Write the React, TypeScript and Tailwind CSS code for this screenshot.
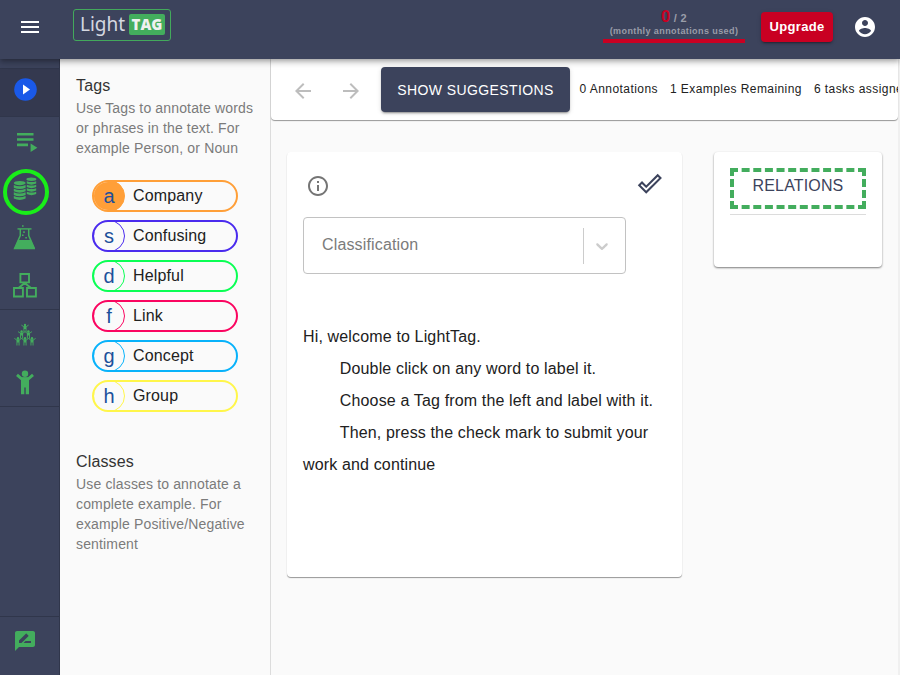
import React from "react";

const tags = [
  { key: "a", name: "Company", border: "border-[#ff9f38]", fill: "bg-[#ff9f38]" },
  { key: "s", name: "Confusing", border: "border-[#4a2bee]", fill: "" },
  { key: "d", name: "Helpful", border: "border-[#0aff54]", fill: "" },
  { key: "f", name: "Link", border: "border-[#fa0560]", fill: "" },
  { key: "g", name: "Concept", border: "border-[#08b2fa]", fill: "" },
  { key: "h", name: "Group", border: "border-[#fff64a]", fill: "" },
];

function Logo() {
  return (
    <div className="mt-[9px] ml-[33px] flex h-8 w-[98px] items-center rounded-[3px] border-[1.5px] border-[#43a95c] pl-[6px] font-['Noto_Sans',sans-serif]">
      <span className="w-[49px] pb-[2px] text-[19px] leading-[26px] font-normal text-[#d5d8e0]">Light</span>
      <span className="mb-px flex h-[21px] w-9 items-center justify-center rounded-[2px] bg-[#43ad5d] font-['Open_Sans',sans-serif] text-[15px] font-extrabold text-[#eef1f0]">TAG</span>
    </div>
  );
}

function Coins() {
  return (
    <svg width="48" height="48" viewBox="2 168 48 48" fill="#43ad5d">
      <circle cx="26" cy="192" r="21" fill="none" stroke="#19ee19" strokeWidth="4" />
      {[0, 1, 2, 3].map((i) => (
        <path key={i} d={`M26.800 ${181.200 + i * 3.500}q5 1.800 9.400 0v2.400q-4.800 2.200-9.400 0z`} />
      ))}
      <ellipse cx="31.400" cy="179.300" rx="5" ry="1.700" />
      {[0, 1, 2, 3].map((i) => (
        <path key={i} d={`M13.800 ${185.100 + i * 3.600}q5.900 2.500 11.800 0v2.600q-5.900 2.800-11.800 0z`} />
      ))}
      <ellipse cx="19.700" cy="183.100" rx="5.900" ry="2.100" />
    </svg>
  );
}

function Figure({ x, y }: { x: number; y: number }) {
  return (
    <g transform={`translate(${x} ${y})`}>
      <circle cx="0" cy="1.500" r="1.200" />
      <path d="M-3.600 1.600l2.200 1.500h2.800l2.200-1.500" stroke="#43ad5d" strokeWidth="0.900" fill="none" />
      <path d="M-1.500 2.800h3v5.800H.6V5.600H-.6v3h-.9z" />
    </g>
  );
}

function SideNav() {
  return (
    <nav className="flex w-[60px] shrink-0 flex-col border-r border-[#30364b] bg-[#3c435c] pt-[9px]">
      <div className="flex h-[49px] items-center border-t border-b border-[#30364b] bg-[#34394f] pb-[6px] pl-[14px]">
        <svg width="23" height="23" viewBox="0 0 23 23">
          <circle cx="11.500" cy="11.500" r="11.300" fill="#1a59e8" />
          <path d="M9 6.500v10l7-5z" fill="white" />
        </svg>
      </div>
      <div className="flex h-[50px] items-center pl-[17px]">
        <svg width="21" height="20" fill="#43ad5d">
          <path d="M0 1h16.500v2.600H0zM0 6.200h16.500v2.600H0zM0 11.600h11v2.600H0zM13.600 11.600v8.400l6.800-4.200z" />
        </svg>
      </div>
      <div className="flex h-[49px] items-center pl-[2px]">
        <Coins />
      </div>
      <div className="flex h-[44px] items-center pl-[13px]">
        <svg width="22" height="26" viewBox="13 225 22 26" fill="#43ad5d">
          <path d="M17.500 228.200h14v1.400h-14z" />
          <path d="M20.300 229v6.500L14.600 248.400h19.800L28.700 235.500V229" fill="none" stroke="#43ad5d" strokeWidth="1.500" />
          <path d="M18 240h13l4 9H14z" />
          <path d="M22 225.200h1.600v1.600H22zM23.200 231.300h1.600v1.600h-1.600zM22 234.500h1.600v1.600H22zM25.300 237h1.600v1.600h-1.600z" />
        </svg>
      </div>
      <div className="flex h-[50px] items-center border-b border-[#30364b] pl-[13px]">
        <svg width="24" height="26" viewBox="13 272 24 26" fill="none" stroke="#43ad5d" strokeWidth="1.900">
          <path d="M20.400 274h8.600v8.400h-8.600zM14 288h8.900v8.500H14zM27 288h8.900v8.500H27zM18.500 288l6.200-5 6.300 5" />
        </svg>
      </div>
      <div className="flex h-[49px] items-center pl-[13px]">
        <svg width="24" height="24" viewBox="0 0 24 24" fill="#43ad5d">
          <Figure x={12} y={0.500} />
          <Figure x={8.600} y={7} />
          <Figure x={15.400} y={7} />
          <Figure x={5} y={13.800} />
          <Figure x={12} y={13.800} />
          <Figure x={19} y={13.800} />
        </svg>
      </div>
      <div className="flex h-12 items-center border-b border-[#30364b] pl-4">
        <svg width="18" height="25" viewBox="0 0 18 25" fill="#43ad5d">
          <circle cx="9" cy="3.700" r="3.200" />
          <path d="M1 4.800l4.600 4h6.800l4.600-4" fill="none" stroke="#43ad5d" strokeWidth="2.900" />
          <path d="M5 7.600h8v16.600H9.700V17.500H8.300v6.700H5z" />
        </svg>
      </div>
      <div className="mt-auto flex h-[59px] items-start border-t border-[#30364b] pt-3 pl-[13px]">
        <svg width="24" height="24" viewBox="0 0 24 24" fill="#43ad5d">
          <path d="M20 2H4c-1.100 0-1.990.9-1.990 2L2 22l4-4h14c1.100 0 2-.9 2-2V4c0-1.100-.9-2-2-2zM6 14v-2.470l6.880-6.880c.2-.2.51-.2.71 0l1.770 1.770c.2.2.2.51 0 .71L8.470 14H6zm12 0h-7.500l2-2H18v2z" />
        </svg>
      </div>
    </nav>
  );
}

export default function App() {
  return (
    <div className="flex h-[675px] w-[900px] flex-col overflow-hidden bg-[#fafafa] font-['Liberation_Sans',Arial,sans-serif] text-[#212121]">
      <header className="relative z-10 flex h-[59px] shrink-0 bg-[#3c435c] shadow-[0_2px_4px_-1px_rgba(0,0,0,0.2),0_4px_5px_0_rgba(0,0,0,0.14),0_1px_10px_0_rgba(0,0,0,0.12)]">
        <svg className="mt-[15px] ml-[18px] h-6 w-[22px]" viewBox="2 0 22 24" fill="white">
          <path d="M3 18h18v-2H3v2zm0-5h18v-2H3v2zm0-7v2h18V6H3z" transform="translate(2 0)" />
        </svg>
        <Logo />
        <div className="ml-auto flex h-[43px] w-[142px] flex-col items-center border-b-4 border-[#c90022] pt-[7px] font-bold text-[#9a9da9]">
          <div className="flex h-[18px] items-baseline text-[11px] leading-[18px] tracking-[0.4px]">
            <span className="mr-[3.500px] text-[16.500px] tracking-normal text-[#c90022]">0</span>
            <span>/ 2</span>
          </div>
          <div className="text-[9px] leading-3 tracking-[0.41px] whitespace-nowrap">(monthly annotations used)</div>
        </div>
        <button className="mt-3 ml-4 h-[30px] w-[72px] rounded bg-[#c90022] text-[13px] font-bold tracking-[0.35px] text-white shadow-[0_3px_1px_-2px_rgba(0,0,0,0.2),0_2px_2px_0_rgba(0,0,0,0.14),0_1px_5px_0_rgba(0,0,0,0.12)]">
          Upgrade
        </button>
        <svg className="mt-[15px] mr-[23px] ml-5 h-6 w-6" viewBox="0 0 24 24" fill="white">
          <path d="M12 2C6.480 2 2 6.480 2 12s4.480 10 10 10 10-4.480 10-10S17.520 2 12 2zm0 3c1.660 0 3 1.340 3 3s-1.340 3-3 3-3-1.340-3-3 1.340-3 3-3zm0 14.200c-2.500 0-4.710-1.280-6-3.220.03-1.990 4-3.080 6-3.080 1.990 0 5.970 1.090 6 3.080-1.290 1.940-3.500 3.220-6 3.220z" />
        </svg>
      </header>

      <div className="flex min-h-0 flex-1">
        <SideNav />

        <aside className="w-[211px] shrink-0 border-r border-[#dcdcdc] pt-[15px] pl-4">
          <h2 className="text-[16px] leading-6 tracking-[0.15px] text-[#333]">Tags</h2>
          <p className="w-[184px] text-[14px] leading-5 tracking-[0.15px] text-[#7b7b7b]">
            Use Tags to annotate words or phrases in the text. For example Person, or Noun
          </p>
          <ul className="mt-[22px] ml-4 flex flex-col gap-2">
            {tags.map((t) => (
              <li key={t.key} className={`flex h-8 w-[146px] overflow-hidden rounded-full border-2 ${t.border}`}>
                <span className={`-mt-[2px] -ml-px flex h-8 w-8 shrink-0 items-center justify-center rounded-full border text-[20px] text-[#1c509b] ${t.border} ${t.fill}`}>
                  {t.key}
                </span>
                <span className="ml-2 text-[16px] leading-[27px] tracking-[0.15px]">{t.name}</span>
              </li>
            ))}
          </ul>
          <h2 className="mt-[38px] text-[16px] leading-6 tracking-[0.15px] text-[#333]">Classes</h2>
          <p className="w-[184px] text-[14px] leading-5 tracking-[0.15px] text-[#7b7b7b]">
            Use classes to annotate a complete example. For example Positive/Negative sentiment
          </p>
        </aside>

        <main className="min-w-0 flex-1 border-r-2 border-[#f0f0f0]">
          <div className="flex h-[61px] items-center overflow-hidden rounded-b bg-white pl-5 shadow-[0_1px_1px_0_rgba(0,0,0,0.4)]">
            <svg className="mt-[3px] h-6 w-6 shrink-0" viewBox="0 0 24 24" fill="#bdbdbd">
              <path d="M20 11H7.830l5.590-5.590L12 4l-8 8 8 8 1.410-1.410L7.830 13H20v-2z" />
            </svg>
            <svg className="mt-[3px] ml-6 h-6 w-6 shrink-0" viewBox="0 0 24 24" fill="#bdbdbd">
              <path d="M12 4l-1.410 1.410L16.170 11H4v2h12.170l-5.580 5.590L12 20l8-8z" />
            </svg>
            <button className="ml-[18px] h-[45px] w-[189px] shrink-0 rounded bg-[#3c435c] pt-px text-[14px] tracking-[0.4px] whitespace-nowrap text-white shadow-[0_3px_1px_-2px_rgba(0,0,0,0.2),0_2px_2px_0_rgba(0,0,0,0.14),0_1px_5px_0_rgba(0,0,0,0.12)]">
              SHOW SUGGESTIONS
            </button>
            <div className="ml-[9.600px] flex shrink-0 gap-3 pb-[2px] text-[12px] tracking-[0.43px] whitespace-nowrap">
              <span>0 Annotations</span>
              <span>1 Examples Remaining</span>
              <span>6 tasks assigned</span>
            </div>
          </div>

          <div className="mt-8 ml-4 flex items-start gap-8">
            <section className="h-[425px] w-[395px] rounded bg-white px-4 pt-[21px] shadow-[0_1px_1px_0_rgba(0,0,0,0.4)]">
              <div className="flex h-6 justify-between px-[3px]">
                <svg className="mt-px h-6 w-6" viewBox="0 0 24 24" fill="#757575">
                  <path d="M11 17h2v-6h-2v6zm1-15C6.480 2 2 6.480 2 12s4.480 10 10 10 10-4.480 10-10S17.520 2 12 2zm0 18c-4.410 0-8-3.590-8-8s3.590-8 8-8 8 3.590 8 8-3.590 8-8 8zM11 9h2V7h-2v2z" />
                </svg>
                <svg className="h-6 w-[26px]" viewBox="0 0 26 24" fill="none">
                  <path d="M2.900 10.200l6.300 6.300L22.800 2.900" stroke="#3c435c" strokeWidth="6" />
                  <path d="M4.300 11.600l4.900 4.900L21.400 4.300" stroke="white" strokeWidth="1.900" />
                </svg>
              </div>
              <div className="mt-5 flex h-[57px] w-[323px] items-center rounded border border-[#c2c2c2] pl-[18px]">
                <span className="pb-[2px] text-[16px] tracking-[0.15px] text-[#7b7b7b]">Classification</span>
                <span className="mr-[8px] ml-auto h-9 w-px bg-[#ccc]" />
                <svg className="mt-px mr-[13px]" width="20" height="20" viewBox="0 0 20 20" fill="#ccc">
                  <path d="M4.516 7.548c.436-.446 1.043-.481 1.576 0L10 11.295l3.908-3.747c.533-.481 1.141-.446 1.574 0 .436.445.408 1.197 0 1.615-.406.418-4.695 4.502-4.695 4.502a1.095 1.095 0 01-1.576 0S4.924 9.581 4.516 9.163s-.436-1.170 0-1.615z" />
                </svg>
              </div>
              <div className="mt-[47px] text-[16px] leading-8 tracking-[0.15px]">
                <p>Hi, welcome to LightTag.</p>
                <p className="indent-[36.800px]">Double click on any word to label it.</p>
                <p className="indent-[36.800px]">Choose a Tag from the left and label with it.</p>
                <p className="indent-[36.800px]">Then, press the check mark to submit your work and continue</p>
              </div>
            </section>

            <section className="h-[115px] w-[168px] rounded bg-white p-4 shadow-[0_1px_2px_0_rgba(0,0,0,0.5)]">
              <div className="h-[41px] border-4 border-dashed border-[#43ad5d] text-center text-[16px] leading-[27px] tracking-[0.15px] text-[#3c435c]">RELATIONS</div>
              <div className="mt-[5px] h-px bg-[#dcdcdc]" />
            </section>
          </div>
        </main>
      </div>
    </div>
  );
}
